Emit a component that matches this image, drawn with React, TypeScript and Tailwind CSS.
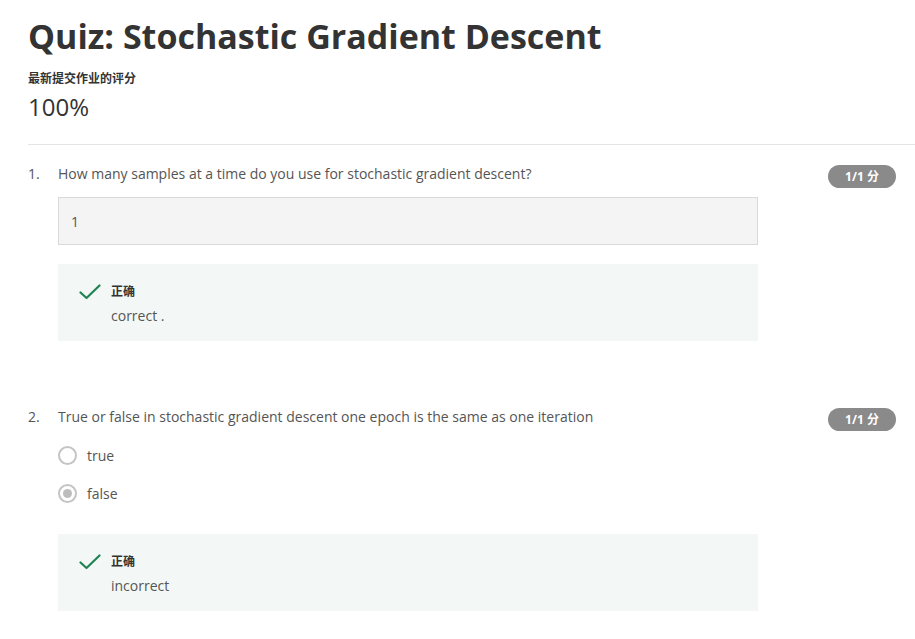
import React from "react";

const font = { fontFamily: '"Open Sans", "Noto Sans CJK SC", sans-serif' };

function Check() {
  return (
    <svg width="22" height="16" viewBox="0 0 22 16" className="shrink-0">
      <path d="M1.5 8.5 L7.5 14 L20.5 1.5" fill="none" stroke="#1f8354" strokeWidth="2.2" strokeLinecap="round" strokeLinejoin="round" />
    </svg>
  );
}

function Badge() {
  return (
    <div className="mt-[2px] flex h-[23px] w-[68px] items-center justify-center rounded-full bg-[#8a8a8a] text-[12px] font-bold text-white">
      1/1 分
    </div>
  );
}

function Feedback({ text }: { text: string }) {
  return (
    <div className="flex h-[77px] w-[700px] gap-[10px] bg-[#f3f8f6] pl-[21px] pt-[20px]">
      <Check />
      <div className="flex flex-col">
        <div className="text-[12px] font-bold leading-[16px] text-[#333]">正确</div>
        <div className="mt-[6px] text-[14px] leading-[20px] text-[#555]">{text}</div>
      </div>
    </div>
  );
}

function Radio({ checked, label }: { checked?: boolean; label: string }) {
  return (
    <div className="flex h-[24px] items-center gap-[10px]">
      <div className="flex h-[19px] w-[19px] items-center justify-center rounded-full border-2 border-[#c4c4c4] bg-white">
        {checked && <div className="h-[9px] w-[9px] rounded-full bg-[#bdbdbd]" />}
      </div>
      <span className="text-[14px] text-[#555]">{label}</span>
    </div>
  );
}

export default function App() {
  return (
    <div className="min-h-[639px] bg-white pl-[28px] pt-[13px]" style={font}>
      <h1 className="text-[34px] font-bold leading-[46px] text-[#333]">Quiz: Stochastic Gradient Descent</h1>
      <div className="mt-[12px] text-[12px] font-bold leading-[16px] text-[#333]">最新提交作业的评分</div>
      <div className="mt-[5px] text-[24px] leading-[30px] text-[#333]">100%</div>
      <div className="mt-[22px] h-px bg-[#e5e5e5]" />

      <div className="mt-[18px] flex items-start pr-[19px]">
        <div className="w-[30px] text-[14px] leading-[22px] text-[#555]">1.</div>
        <div className="flex-1">
          <div className="text-[14px] leading-[22px] text-[#555]">How many samples at a time do you use for stochastic gradient descent?</div>
          <div className="mt-[12px] flex h-[48px] w-[700px] items-center border border-[#d9d9d9] bg-[#f4f4f4] pl-[12px] text-[14px] text-[#555]">1</div>
          <div className="mt-[19px]">
            <Feedback text="correct ." />
          </div>
        </div>
        <Badge />
      </div>

      <div className="mt-[65px] flex items-start pr-[19px]">
        <div className="w-[30px] text-[14px] leading-[22px] text-[#555]">2.</div>
        <div className="flex-1">
          <div className="text-[14px] leading-[22px] text-[#555]">True or false in stochastic gradient descent one epoch is the same as one iteration</div>
          <div className="mt-[15px] flex flex-col gap-[14px]">
            <Radio label="true" />
            <Radio checked label="false" />
          </div>
          <div className="mt-[29px]">
            <Feedback text="incorrect" />
          </div>
        </div>
        <Badge />
      </div>
    </div>
  );
}
